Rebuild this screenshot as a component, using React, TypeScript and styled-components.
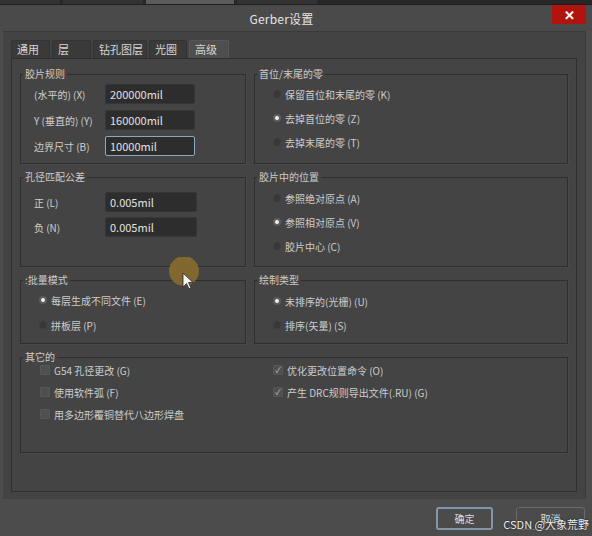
import styled, { createGlobalStyle } from 'styled-components';

const GlobalStyle = createGlobalStyle`
  html, body {
    margin: 0;
    padding: 0;
    background: #4c4c4c;
  }
  * {
    box-sizing: border-box;
  }
`;

const TABS = ['通用', '层', '钻孔图层', '光圈', '高级'];

const Window = styled.div`
  position: relative;
  width: 592px;
  height: 536px;
  overflow: hidden;
  display: flex;
  flex-direction: column;
  background: #4c4c4c;
  font-family: 'Noto Sans CJK SC', 'Noto Sans', sans-serif;
  color: #cdcdcd;
`;

const TaskStrip = styled.div`
  height: 5px;
  display: flex;
  background: #272727;
  border-bottom: 1px solid #1e1e1e;
`;

const TaskItem = styled.div<{ $w: number; $light?: boolean }>`
  width: ${({ $w }) => $w}px;
  margin-right: 3px;
  background: ${({ $light }) => ($light ? '#5c5c5c' : '#333')};
`;

const TitleBar = styled.div`
  height: 26px;
  display: flex;
  align-items: center;
  padding: 0 6px 0 3px;
  background: #4a4a4a;
`;

const Title = styled.div`
  flex: 1;
  text-align: center;
  padding-left: 8px;
  font-size: 12px;
  color: #e4e4e4;
  letter-spacing: 0.2px;
`;

const CloseButton = styled.div`
  width: 34px;
  height: 19px;
  align-self: flex-start;
  display: flex;
  align-items: center;
  justify-content: center;
  background: #b1140e;
  color: #fff;
  font-size: 13px;
  font-weight: bold;
`;

const OuterPanel = styled.div`
  height: 468px;
  margin: 0 6px 0 3px;
  padding: 8px 8px 7px 8px;
  display: flex;
  flex-direction: column;
  background: #434343;
  border-top: 1px solid #3a3a3a;
  border-right: 1px solid #3a3a3a;
`;

const TabRow = styled.div`
  display: flex;
  gap: 2px;
  height: 18px;
`;

const Tab = styled.div<{ $w: number; $active?: boolean }>`
  width: ${({ $w }) => $w}px;
  height: 18px;
  padding: 1px 0 0 5px;
  font-size: 11px;
  line-height: 15px;
  color: #d6d6d6;
  background: ${({ $active }) => ($active ? '#4e4e4e' : '#3a3a3a')};
  border: 1px solid ${({ $active }) => ($active ? '#575757' : '#343434')};
  border-bottom: none;
  border-radius: 2px 2px 0 0;
`;

const TabContent = styled.div`
  flex: 1;
  padding: 8px 8px 0 8px;
  background: #444444;
  border: 1px solid #2f2f2f;
  display: grid;
  grid-template-columns: 226px 314px;
  grid-template-rows: 97px 97px 71px 103px;
  column-gap: 8px;
  row-gap: 6px;
  align-content: start;
`;

const Group = styled.fieldset<{ $wide?: boolean; $gap?: number; $top?: number }>`
  margin: 0;
  min-width: 0;
  padding: ${({ $top }) => $top ?? 4}px 0 0 0;
  border: 1px solid #2e2e2e;
  box-shadow: 1px 1px 0 #4a4a4a;
  display: flex;
  flex-direction: column;
  gap: ${({ $gap }) => $gap ?? 6}px;
  grid-column: ${({ $wide }) => ($wide ? '1 / 3' : 'auto')};
`;

const Legend = styled.legend`
  margin-left: 2px;
  padding: 0 2px;
  font-size: 10px;
  line-height: 14px;
  color: #cbcbcb;
`;

const FieldRow = styled.div`
  display: flex;
  align-items: center;
  height: 20px;
  padding-left: 13px;
`;

const FieldLabel = styled.span`
  width: 71px;
  font-size: 10px;
  color: #cfcfcf;
`;

const Input = styled.div<{ $w: number; $focus?: boolean }>`
  width: ${({ $w }) => $w}px;
  height: 20px;
  padding-left: 4px;
  display: flex;
  align-items: center;
  font-size: 11px;
  color: #e2e2e2;
  background: #2d2d2d;
  border: 1px solid ${({ $focus }) => ($focus ? '#8ea6bf' : '#363636')};
  border-radius: 2px;
`;

const OptionRow = styled.div<{ $pad: number }>`
  display: flex;
  align-items: center;
  height: 18px;
  padding-left: ${({ $pad }) => $pad}px;
  gap: 4px;
  font-size: 10px;
  color: #cdcdcd;
`;

const Radio = styled.span<{ $on?: boolean }>`
  width: 8px;
  height: 8px;
  border-radius: 50%;
  background: ${({ $on }) => ($on ? '#f2f2f2' : '#383838')};
  border: ${({ $on }) => ($on ? '2px solid #5e5e5e' : '1px solid #3c3c3c')};
  flex-shrink: 0;
`;

const CheckGrid = styled.div`
  display: grid;
  grid-template-columns: 233px 1fr;
  grid-auto-rows: 16px;
  row-gap: 6px;
  margin-top: -2px;
  padding-left: 19px;
`;

const CheckItem = styled.div`
  display: flex;
  align-items: center;
  gap: 4px;
  font-size: 10px;
  color: #cdcdcd;
`;

const Box = styled.span`
  width: 10px;
  height: 10px;
  flex-shrink: 0;
  display: flex;
  align-items: center;
  justify-content: center;
  background: #4f4f4f;
  border: 1px solid #575757;
  border-radius: 1px;
  color: #c4c4c4;
  font-size: 8px;
  line-height: 1;
`;

const Footer = styled.div`
  flex: 1;
  display: flex;
  justify-content: flex-end;
  align-items: flex-start;
  gap: 23px;
  padding: 8px 7px 0 0;
`;

const Button = styled.div<{ $w: number; $default?: boolean }>`
  width: ${({ $w }) => $w}px;
  height: 23px;
  display: flex;
  align-items: center;
  justify-content: center;
  font-size: 10px;
  color: #dedede;
  background: #4b4b4b;
  border: ${({ $default }) => ($default ? '2px solid #8397ab' : '1px solid #6a6a6a')};
  border-radius: 3px;
`;

const Watermark = styled.div`
  position: absolute;
  right: 3px;
  bottom: 4px;
  font-size: 11px;
  color: #f0f0f0;
  text-shadow: 0 0 2px #222, 0 0 1px #222;
  font-family: 'Noto Sans CJK SC', 'Noto Sans', sans-serif;
`;

const Pointer = styled.svg`
  position: absolute;
  left: 168px;
  top: 257px;
`;

const TAB_WIDTHS = [39, 39, 54, 38, 40];

export default function App() {
  return (
    <Window>
      <GlobalStyle />
      <TaskStrip>
        <TaskItem $w={60} />
        <TaskItem $w={80} />
        <TaskItem $w={88} $light />
        <TaskItem $w={80} />
      </TaskStrip>
      <TitleBar>
        <Title>Gerber设置</Title>
        <CloseButton>✕</CloseButton>
      </TitleBar>
      <OuterPanel>
        <TabRow>
          {TABS.map((t, i) => (
            <Tab key={t} $w={TAB_WIDTHS[i]} $active={i === 4}>
              {t}
            </Tab>
          ))}
        </TabRow>
        <TabContent>
          <Group $top={3}>
            <Legend>胶片规则</Legend>
            <FieldRow>
              <FieldLabel>(水平的) (X)</FieldLabel>
              <Input $w={90}>200000mil</Input>
            </FieldRow>
            <FieldRow>
              <FieldLabel>Y (垂直的) (Y)</FieldLabel>
              <Input $w={90}>160000mil</Input>
            </FieldRow>
            <FieldRow>
              <FieldLabel>边界尺寸 (B)</FieldLabel>
              <Input $w={90} $focus>10000mil</Input>
            </FieldRow>
          </Group>
          <Group $top={4}>
            <Legend>首位/末尾的零</Legend>
            <OptionRow $pad={18}><Radio />保留首位和末尾的零 (K)</OptionRow>
            <OptionRow $pad={18}><Radio $on />去掉首位的零 (Z)</OptionRow>
            <OptionRow $pad={18}><Radio />去掉末尾的零 (T)</OptionRow>
          </Group>

          <Group $top={8} $gap={5}>
            <Legend>孔径匹配公差</Legend>
            <FieldRow>
              <FieldLabel>正 (L)</FieldLabel>
              <Input $w={92}>0.005mil</Input>
            </FieldRow>
            <FieldRow>
              <FieldLabel>负 (N)</FieldLabel>
              <Input $w={92}>0.005mil</Input>
            </FieldRow>
          </Group>
          <Group $top={5}>
            <Legend>胶片中的位置</Legend>
            <OptionRow $pad={18}><Radio />参照绝对原点 (A)</OptionRow>
            <OptionRow $pad={18}><Radio $on />参照相对原点 (V)</OptionRow>
            <OptionRow $pad={18}><Radio />胶片中心 (C)</OptionRow>
          </Group>

          <Group $top={4} $gap={7}>
            <Legend>:批量模式</Legend>
            <OptionRow $pad={18}><Radio $on />每层生成不同文件 (E)</OptionRow>
            <OptionRow $pad={18}><Radio />拼板层 (P)</OptionRow>
          </Group>
          <Group $top={5} $gap={6}>
            <Legend>绘制类型</Legend>
            <OptionRow $pad={18}><Radio $on />未排序的(光栅) (U)</OptionRow>
            <OptionRow $pad={18}><Radio />排序(矢量) (S)</OptionRow>
          </Group>

          <Group $wide $top={0}>
            <Legend>其它的</Legend>
            <CheckGrid>
              <CheckItem><Box />G54 孔径更改 (G)</CheckItem>
              <CheckItem><Box>✓</Box>优化更改位置命令 (O)</CheckItem>
              <CheckItem><Box />使用软件弧 (F)</CheckItem>
              <CheckItem><Box>✓</Box>产生 DRC规则导出文件(.RU) (G)</CheckItem>
              <CheckItem><Box />用多边形覆铜替代八边形焊盘</CheckItem>
            </CheckGrid>
          </Group>
        </TabContent>
      </OuterPanel>
      <Footer>
        <Button $w={57} $default>确定</Button>
        <Button $w={69}>取消</Button>
      </Footer>
      <Pointer width="34" height="34" viewBox="0 0 34 34">
        <circle cx="16" cy="14" r="15" fill="#8c6f2c" opacity="0.85" />
        <path d="M15 16 L15 30 L18.5 26.5 L21 32 L23 31 L20.5 25.5 L25 25.5 Z" fill="#f4f4f4" stroke="#222" strokeWidth="0.8" />
      </Pointer>
      <Watermark>CSDN @大象荒野</Watermark>
    </Window>
  );
}
